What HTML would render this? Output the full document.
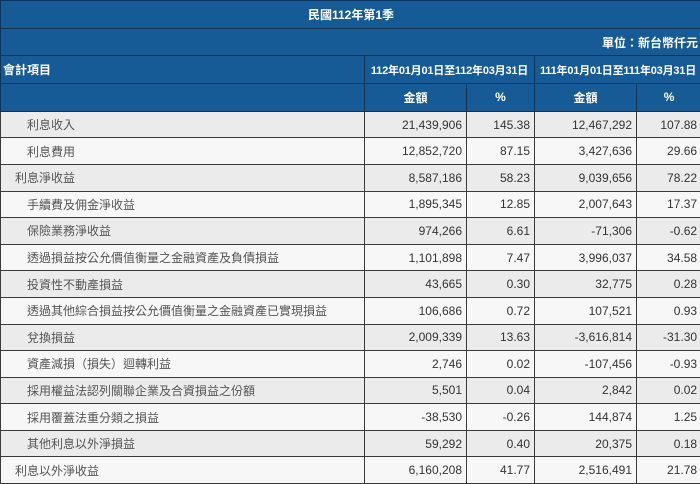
<!DOCTYPE html><html><head><meta charset="utf-8"><style>
body{margin:0;width:700px;height:483px;overflow:hidden;background:#fff;font-family:"Liberation Sans","Noto Sans CJK TC",sans-serif;}
table{border-collapse:collapse;table-layout:fixed;width:701px;}
td{border:1px solid #3a3a3a;padding:0 4px;font-size:12px;white-space:nowrap;overflow:hidden;box-sizing:border-box;}
tr.h td{background:#165a96;color:#fff;font-weight:bold;height:27.7px;border-color:#0e3557;}
tr.b td{height:26.6px;color:#333;text-align:right;}
tr.b td:first-child{text-align:left;color:#555;padding-left:14px;}
tr.b td.s{padding-left:26px;}
tr.b:nth-child(odd) td{background:#ebebeb;}
tr.b:nth-child(even) td{background:#f7f7f7;}
td.dt{font-size:11px;letter-spacing:-0.2px;text-align:center;padding:0;}
</style></head><body><table>
<colgroup><col style="width:364px"><col style="width:102px"><col style="width:68px"><col style="width:102px"><col style="width:65px"></colgroup>
<tr class="h"><td colspan="5" style="text-align:center">民國112年第1季</td></tr>
<tr class="h"><td colspan="5" style="text-align:right;padding-right:3px">單位：新台幣仟元</td></tr>
<tr class="h"><td style="padding-left:2px">會計項目</td><td colspan="2" class="dt">112年01月01日至112年03月31日</td><td colspan="2" class="dt">111年01月01日至111年03月31日</td></tr>
<tr class="h"><td></td><td style="text-align:center">金額</td><td style="text-align:center">%</td><td style="text-align:center">金額</td><td style="text-align:center">%</td></tr>
<tr class="b"><td class="s">利息收入</td><td>21,439,906</td><td>145.38</td><td>12,467,292</td><td>107.88</td></tr>
<tr class="b"><td class="s">利息費用</td><td>12,852,720</td><td>87.15</td><td>3,427,636</td><td>29.66</td></tr>
<tr class="b"><td>利息淨收益</td><td>8,587,186</td><td>58.23</td><td>9,039,656</td><td>78.22</td></tr>
<tr class="b"><td class="s">手續費及佣金淨收益</td><td>1,895,345</td><td>12.85</td><td>2,007,643</td><td>17.37</td></tr>
<tr class="b"><td class="s">保險業務淨收益</td><td>974,266</td><td>6.61</td><td>-71,306</td><td>-0.62</td></tr>
<tr class="b"><td class="s">透過損益按公允價值衡量之金融資產及負債損益</td><td>1,101,898</td><td>7.47</td><td>3,996,037</td><td>34.58</td></tr>
<tr class="b"><td class="s">投資性不動產損益</td><td>43,665</td><td>0.30</td><td>32,775</td><td>0.28</td></tr>
<tr class="b"><td class="s">透過其他綜合損益按公允價值衡量之金融資產已實現損益</td><td>106,686</td><td>0.72</td><td>107,521</td><td>0.93</td></tr>
<tr class="b"><td class="s">兌換損益</td><td>2,009,339</td><td>13.63</td><td>-3,616,814</td><td>-31.30</td></tr>
<tr class="b"><td class="s">資產減損（損失）迴轉利益</td><td>2,746</td><td>0.02</td><td>-107,456</td><td>-0.93</td></tr>
<tr class="b"><td class="s">採用權益法認列關聯企業及合資損益之份額</td><td>5,501</td><td>0.04</td><td>2,842</td><td>0.02</td></tr>
<tr class="b"><td class="s">採用覆蓋法重分類之損益</td><td>-38,530</td><td>-0.26</td><td>144,874</td><td>1.25</td></tr>
<tr class="b"><td class="s">其他利息以外淨損益</td><td>59,292</td><td>0.40</td><td>20,375</td><td>0.18</td></tr>
<tr class="b"><td>利息以外淨收益</td><td>6,160,208</td><td>41.77</td><td>2,516,491</td><td>21.78</td></tr>
</table></body></html>
